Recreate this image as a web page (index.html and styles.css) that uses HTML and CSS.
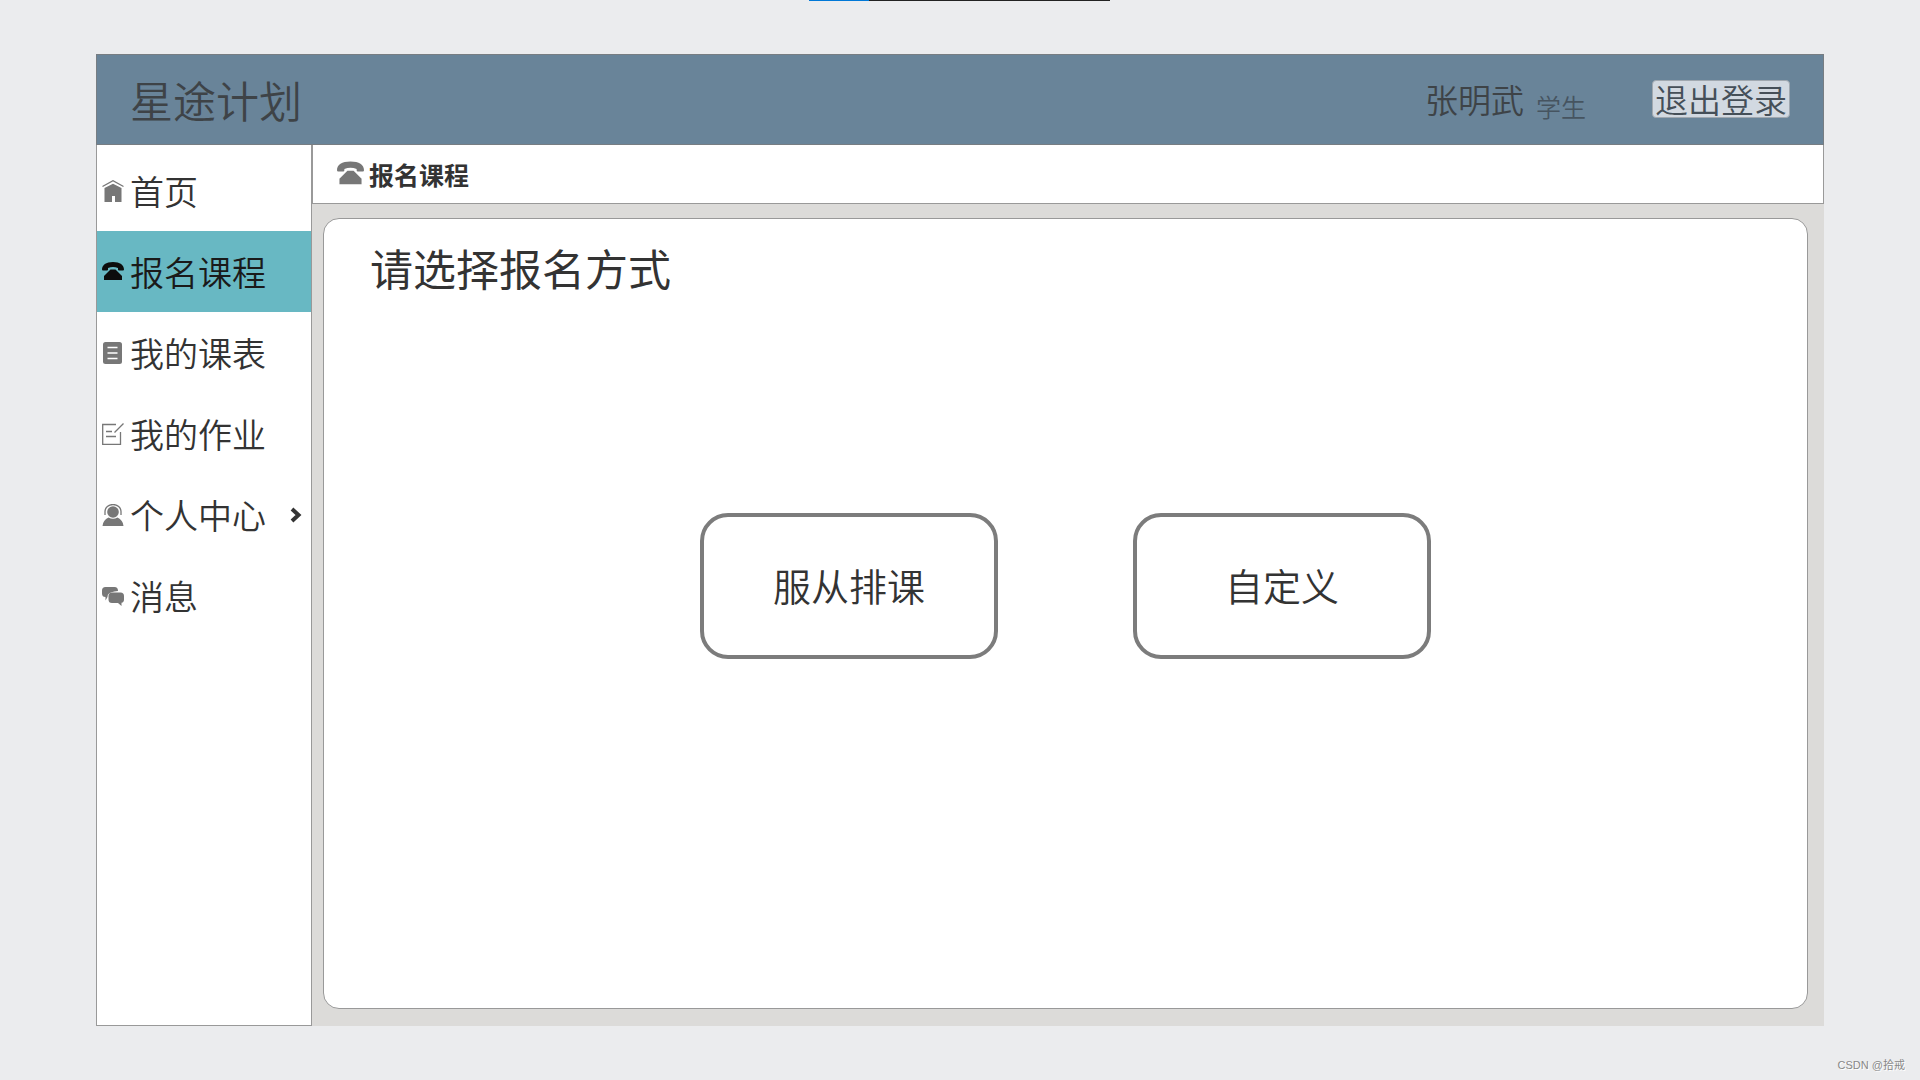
FILE: index.html
```html
<!DOCTYPE html>
<html lang="zh-CN">
<head>
    <meta charset="UTF-8">
    <title>报名课程</title>
    <link rel="stylesheet" href="styles.css">
</head>
<body>
    <!-- 顶部进度条 -->
    <div class="progress"><div class="progress-done"></div></div>

    <div class="app">
        <header class="header">
            <h1 class="logo">星途计划</h1>
            <div class="user">
                <span class="user-name">张明武</span>
                <span class="user-role">学生</span>
                <button class="logout" type="button">退出登录</button>
            </div>
        </header>

        <div class="body">
            <nav class="sidebar">
                <a class="nav-item" href="#">
                    <svg class="icon" viewBox="0 0 22 22"><path d="M0.5 6.5L11 0.7L21.5 6.5" fill="none" stroke="currentColor" stroke-width="1.3"/><path d="M2.5 8L11 3.8L19.5 8V22H13V16H10V22H2.5z"/></svg>
                    <span>首页</span>
                </a>
                <a class="nav-item active" href="#">
                    <svg class="icon" viewBox="0 0 22 22"><path d="M0 8.5C0 4 4 1 11 1S22 4 22 8.5Q22 9.5 21 9.5H17Q16 9.5 16 8.5V7Q11 5 6 7V8.5Q6 9.5 5 9.5H1Q0 9.5 0 8.5z"/><path d="M8.5 8.5H13.5L20 15V19H2V15z"/></svg>
                    <span>报名课程</span>
                </a>
                <a class="nav-item" href="#">
                    <svg class="icon" viewBox="0 0 22 22"><rect x="1" y="0" width="19" height="22" rx="2.5"/><path d="M5.5 5.5H15.5M5.5 11H15.5M5.5 16.5H15.5" stroke="#fff" stroke-width="1.3"/></svg>
                    <span>我的课表</span>
                </a>
                <a class="nav-item" href="#">
                    <svg class="icon icon-line" viewBox="0 0 22 22"><path d="M14 1.5H0.7V21.3H18.5V9M21.5 0.5L12.5 9.5M4 8.5H10M4 13.5H14"/></svg>
                    <span>我的作业</span>
                </a>
                <a class="nav-item" href="#">
                    <svg class="icon" viewBox="0 0 22 22"><circle cx="11" cy="8" r="5.8"/><path d="M3 11V7.5A8 7 0 0 1 19 7.5V11" fill="none" stroke="currentColor" stroke-width="1.3"/><path d="M0.5 22Q1 16 6.5 13.5Q11 16 15.5 13.5Q21 16 21.5 22z"/></svg>
                    <span>个人中心</span>
                    <svg class="arrow" viewBox="0 0 12 16"><path d="M2 2L8.5 8L2 14"/></svg>
                </a>
                <a class="nav-item" href="#">
                    <svg class="icon" viewBox="0 0 22 22"><path d="M3.5 2H12.5Q16 2 16 6Q8 6.5 6 9.5Q5.5 11 5.5 12L3.5 15.5V12Q0 12 0 8.5V5.5Q0 2 3.5 2z"/><path d="M10 7.5H18.5Q22 7.5 22 11V14.5Q22 17.5 19.5 17.8V21L16 18H10Q6.5 18 6.5 14.5V11Q6.5 7.5 10 7.5z"/></svg>
                    <span>消息</span>
                </a>
            </nav>

            <main class="main">
                <div class="crumb">
                    <svg class="crumb-icon" viewBox="0 0 22 22"><path d="M0 7.5C0 3 4 0.5 11 0.5S22 3 22 7.5Q22 8.5 21 8.5H17Q16 8.5 16 7.5V6.5Q11 4.5 6 6.5V7.5Q6 8.5 5 8.5H1Q0 8.5 0 7.5z"/><path d="M8.5 8H13.5L20 14.5V19H2V14.5z"/></svg>
                    <span>报名课程</span>
                </div>
                <section class="panel">
                    <h2 class="panel-title">请选择报名方式</h2>
                    <div class="choices">
                        <button class="choice" type="button">服从排课</button>
                        <button class="choice" type="button">自定义</button>
                    </div>
                </section>
            </main>
        </div>
    </div>

    <div class="watermark">CSDN @拾戒</div>
</body>
</html>
```
FILE: styles.css
```css
*{
    margin: 0;
    padding: 0;
    box-sizing: border-box;
}
body{
    min-height: 100vh;
    padding: 54px 5%;
    display: flex;
    background: #ebecee;
    color: #333;
    font-family: "Noto Sans CJK SC", sans-serif;
    font-weight: 350;
}
a{
    color: inherit;
    text-decoration: none;
}
button{
    font-family: inherit;
    font-weight: inherit;
    cursor: pointer;
}
svg{
    display: block;
    flex: none;
    fill: currentColor;
}
.progress{
    position: absolute;
    top: 0;
    left: 809px;
    width: 301px;
    height: 1px;
    background: #222;
}
.progress-done{
    width: 20%;
    height: 1px;
    background: #0078d7;
}
.app{
    flex: 1;
    display: flex;
    flex-direction: column;
}

/* 顶栏 */
.header{
    height: 91px;
    padding: 0 33px 2px;
    display: flex;
    align-items: center;
    justify-content: space-between;
    background: #698499;
    border: 1px solid #777d82;
    color: #3e4347;
}
.logo{
    font-size: 43px;
    line-height: 60px;
    font-weight: 350;
}
.user{
    display: flex;
    align-items: center;
    line-height: 36px;
}
.user-name{
    font-size: 33px;
}
.user-role{
    margin: 14px 66px 0 12px;
    font-size: 25px;
    color: #465460;
}
.logout{
    padding: 0 2px;
    border: 1px solid #a0a8b0;
    border-radius: 4px;
    background: #d2d9e1;
    color: #454f58;
    font-size: 33px;
    line-height: 36px;
}

/* 左侧菜单 */
.body{
    flex: 1;
    display: flex;
}
.sidebar{
    width: 216px;
    padding-top: 5px;
    background: #fff;
    border: 1px solid #999;
    border-top: 0;
}
.nav-item{
    height: 81px;
    padding: 0 9px 0 5px;
    display: flex;
    align-items: center;
    gap: 6px;
    font-size: 34px;
    line-height: 48px;
}
.active{
    background: #68b8c3;
    color: #1a1a1a;
}
.icon{
    width: 22px;
    height: 22px;
    color: #777;
}
.active .icon{
    color: #0c0c0c;
}
.icon-line{
    fill: none;
    stroke: currentColor;
    stroke-width: 1.3;
}
.arrow{
    width: 12px;
    height: 16px;
    margin-left: auto;
    fill: none;
    stroke: #333;
    stroke-width: 4;
}

/* 右侧内容 */
.main{
    flex: 1;
    display: flex;
    flex-direction: column;
    background: #dcdbd9;
}
.crumb{
    height: 59px;
    padding-left: 24px;
    display: flex;
    align-items: center;
    gap: 5px;
    background: #fff;
    border: 1px solid #999;
    border-top: 0;
    font-size: 25px;
    font-weight: 700;
}
.crumb-icon{
    width: 27px;
    height: 27px;
    color: #777;
}
.panel{
    flex: 1;
    margin: 14px 16px 17px 11px;
    padding: 16px 46px 80px;
    display: flex;
    flex-direction: column;
    background: #fff;
    border: 1px solid #999;
    border-radius: 16px;
}
.panel-title{
    font-family: KaiTi, "Noto Sans CJK SC", serif;
    font-size: 43px;
    line-height: 64px;
    font-weight: 400;
}
.choices{
    flex: 1;
    display: flex;
    align-items: center;
    justify-content: center;
    gap: 135px;
    padding-bottom: 56px;
}
.choice{
    width: 298px;
    height: 146px;
    padding-bottom: 2px;
    border: 4px solid #7c7c7c;
    border-radius: 28px;
    background: #fff;
    color: #333;
    font-size: 38px;
}
.watermark{
    position: absolute;
    right: 15px;
    bottom: 6px;
    color: #888;
    font-family: "Liberation Sans", "Noto Sans CJK SC", sans-serif;
    font-size: 11px;
    font-weight: 400;
    line-height: 18px;
    text-shadow: 1px 1px #fff;
}
```
